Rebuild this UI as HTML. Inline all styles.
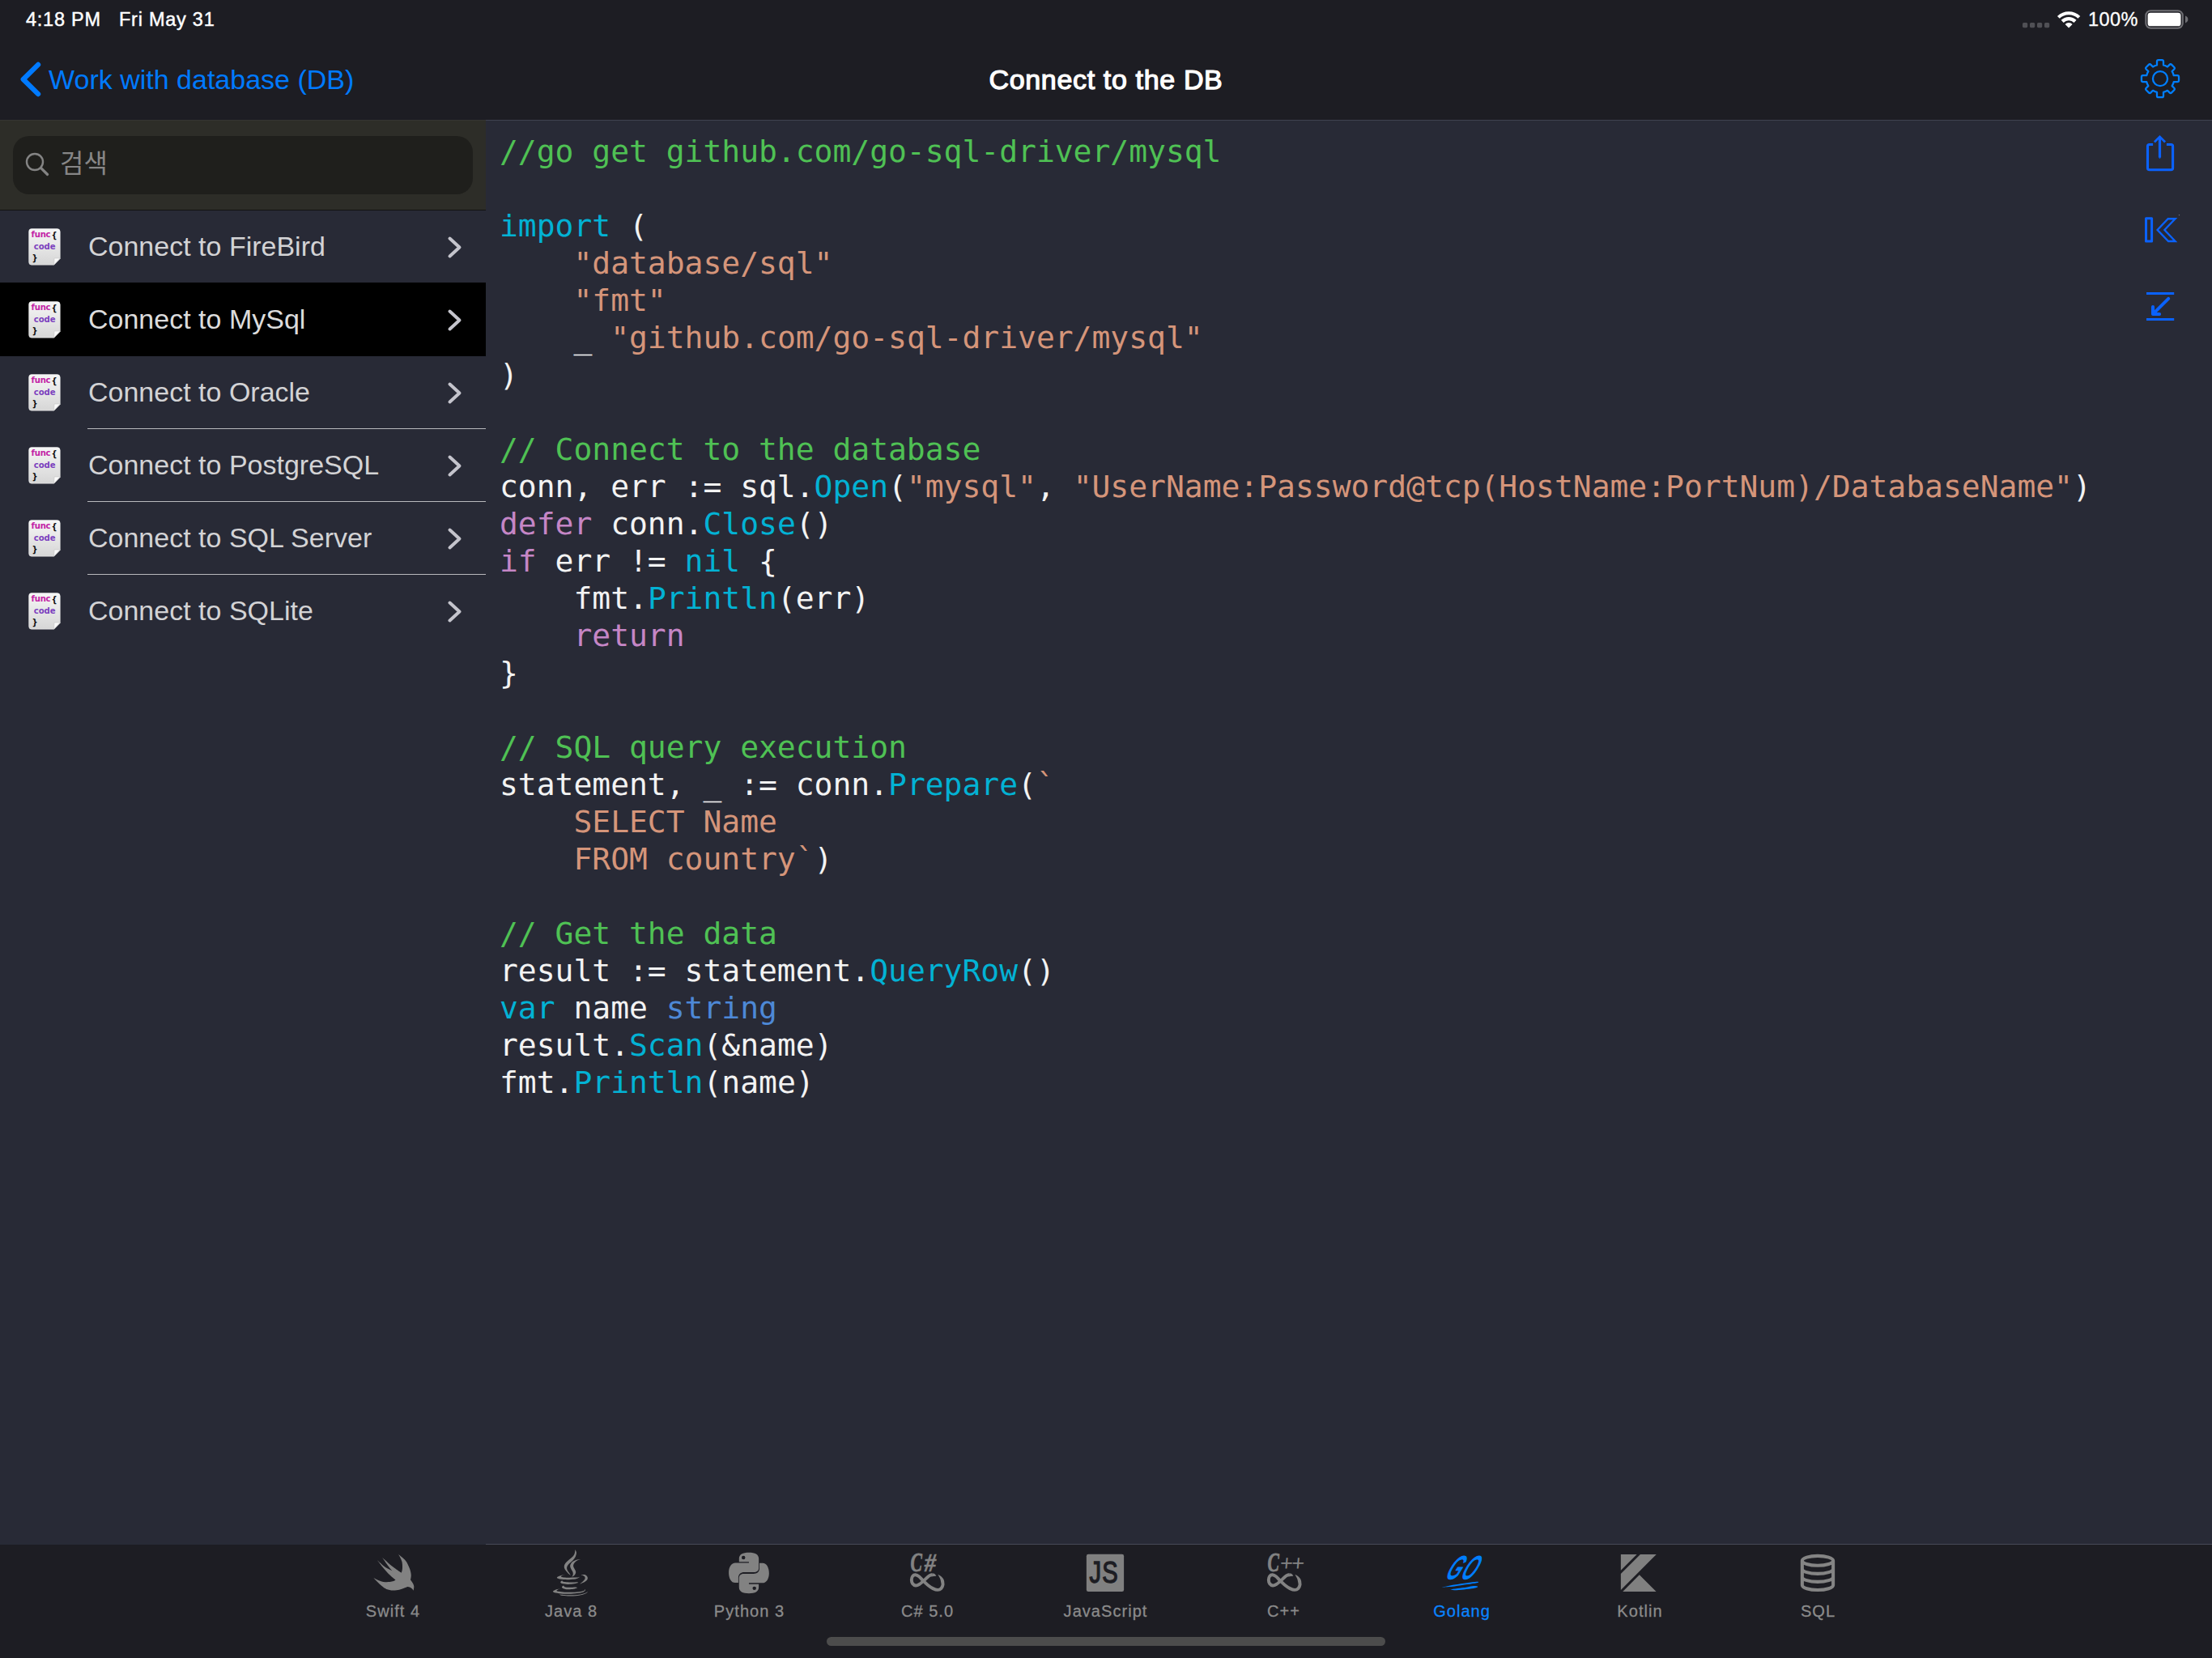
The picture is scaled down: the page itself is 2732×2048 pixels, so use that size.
<!DOCTYPE html>
<html lang="en">
<head>
<meta charset="utf-8">
<title>Connect to the DB</title>
<style>
*{box-sizing:border-box;margin:0;padding:0}
html,body{width:2732px;height:2048px;overflow:hidden;background:#282a36}
body{position:relative;font-family:"Liberation Sans","Noto Sans CJK KR",sans-serif;color:#fff;-webkit-font-smoothing:antialiased}
.abs{position:absolute}
/* ---------- top bar ---------- */
#top{position:absolute;left:0;top:0;width:2732px;height:148px;background:#1d1d23}
#topline{position:absolute;left:0;top:148px;width:2732px;height:1px;background:#3f4250}
#topline i{position:absolute;left:0;top:0;width:600px;height:1px;background:#353532}
.st{position:absolute;top:10px;font-size:23.5px;line-height:28px;white-space:nowrap;color:#fff;letter-spacing:.75px;-webkit-text-stroke:.45px #fff}
#back{position:absolute;left:60px;top:79px;font-size:34px;line-height:38px;color:#007aff;white-space:nowrap}
#title{position:absolute;left:966px;width:800px;top:79px;text-align:center;font-size:34px;line-height:38px;letter-spacing:.65px;-webkit-text-stroke:1.25px #fff;color:#fff;white-space:nowrap}
/* ---------- sidebar ---------- */
#searchbar{position:absolute;left:0;top:149px;width:600px;height:111px;background:#2d2d28;border-bottom:1px solid #131311}
#field{position:absolute;left:16px;top:19px;width:568px;height:72px;border-radius:20px;background:#1f1f1c}
#ph{position:absolute;left:58px;top:11px;font-size:32px;line-height:46px;color:#868686;white-space:nowrap;font-family:"Liberation Sans","Noto Sans CJK KR",sans-serif}
.row{position:absolute;left:0;width:600px;height:90px}
.row.sel{background:#000;height:91px;margin-top:-1px}
.row .t{position:absolute;left:109px;top:25px;font-size:34px;line-height:38px;color:#d3d3d5;white-space:nowrap}
.row.sel .t{color:#dcdcdc;top:26px}
.row .sep{position:absolute;left:108px;right:0;bottom:0;height:1px;background:#b9b9bd}
.row svg.chev{position:absolute;left:551.7px;top:30.5px}
.row.sel svg.chev{top:31.5px}
.row .ico{position:absolute;left:34.5px;top:22px;width:40px;height:46px}
.row.sel .ico{top:23px}
/* ---------- code ---------- */
#code{position:absolute;left:617px;top:164px;font-family:"DejaVu Sans Mono","Liberation Mono",monospace;font-size:38px;line-height:46px;color:#f3f3f3;white-space:pre;letter-spacing:-.02px}
.c{color:#4fc154}.k{color:#03b2d4}.s{color:#d5957a}.p{color:#c586c6}.b{color:#4d88d6}
/* ---------- tab bar ---------- */
#tabline{position:absolute;left:600px;top:1907px;width:2132px;height:1px;background:#464957}
#tab{position:absolute;left:0;top:1908px;width:2732px;height:140px;background:#1d1d23}
.ti{position:absolute;top:0;width:220px;height:100px;text-align:center;color:#8b8b8b}
.ti span{position:absolute;left:0;width:220px;top:70px;font-size:20px;line-height:24px;letter-spacing:1.05px;padding-left:1.05px;white-space:nowrap;-webkit-text-stroke:.3px currentColor}
.ti svg{position:absolute}
.ti.on{color:#0a84ff}
#home{position:absolute;left:1021px;top:114px;width:690px;height:11px;border-radius:6px;background:#4c4c4c}
</style>
</head>
<body>

<!-- ================= TOP BAR ================= -->
<div id="top">
  <div class="st" style="left:32px">4:18 PM</div>
  <div class="st" style="left:147px">Fri May 31</div>
  <div class="st" style="left:2579px;letter-spacing:.45px;-webkit-text-stroke:.3px #fff">100%</div>
  <svg class="abs" style="left:2490px;top:0" width="230" height="48" viewBox="2490 0 230 48"><rect x="2498.0" y="28" width="6.2" height="6.2" rx="1.6" fill="#505055"/><rect x="2507.0" y="28" width="6.2" height="6.2" rx="1.6" fill="#505055"/><rect x="2516.0" y="28" width="6.2" height="6.2" rx="1.6" fill="#505055"/><rect x="2525.0" y="28" width="6.2" height="6.2" rx="1.6" fill="#505055"/><path d="M2540.93 19.93A20.40 20.40 0 0 1 2569.27 19.93L2566.42 22.87A16.30 16.30 0 0 0 2543.78 22.87ZM2545.65 24.82A13.60 13.60 0 0 1 2564.55 24.82L2561.56 27.91A9.30 9.30 0 0 0 2548.64 27.91ZM2555.10 34.60L2550.58 29.92A6.50 6.50 0 0 1 2559.62 29.92Z" fill="#fff"/><rect x="2650.3" y="13.2" width="45.5" height="21.6" rx="6" fill="none" stroke="#6f6f74" stroke-width="2"/><rect x="2652.6" y="15.7" width="40.9" height="16.6" rx="3.4" fill="#fff"/><path d="M2699 19.6 Q2702.4 21 2702.4 24 Q2702.4 27 2699 28.4Z" fill="#6f6f74"/></svg>
  <svg class="abs" style="left:20px;top:70px" width="40" height="56" viewBox="20 70 40 56"><path d="M47.1 79.9L28.7 98L47.1 116.1" fill="none" stroke="#007aff" stroke-width="6.2" stroke-linecap="round" stroke-linejoin="round"/></svg>
  <div id="back">Work with database (DB)</div>
  <div id="title">Connect to the DB</div>
  <svg class="abs" style="left:2638px;top:67px" width="60" height="60" viewBox="2638 67 60 60" fill="none" stroke="#007fff" stroke-width="2.3" stroke-linejoin="round"><path d="M2664.00 80.42L2664.00 75.90Q2664.00 74.10 2665.80 74.10L2670.20 74.10Q2672.00 74.10 2672.00 75.90L2672.00 80.42A17.20 17.20 0 0 1 2677.00 82.49L2679.60 79.90Q2680.87 78.62 2682.14 79.90L2685.25 83.01Q2686.53 84.28 2685.25 85.55L2682.66 88.15A17.20 17.20 0 0 1 2684.73 93.15L2689.25 93.15Q2691.05 93.15 2691.05 94.95L2691.05 99.35Q2691.05 101.15 2689.25 101.15L2684.73 101.15A17.20 17.20 0 0 1 2682.66 106.15L2685.25 108.75Q2686.53 110.02 2685.25 111.29L2682.14 114.40Q2680.87 115.68 2679.60 114.40L2677.00 111.81A17.20 17.20 0 0 1 2672.00 113.88L2672.00 118.40Q2672.00 120.20 2670.20 120.20L2665.80 120.20Q2664.00 120.20 2664.00 118.40L2664.00 113.88A17.20 17.20 0 0 1 2659.00 111.81L2656.40 114.40Q2655.13 115.68 2653.86 114.40L2650.75 111.29Q2649.47 110.02 2650.75 108.75L2653.34 106.15A17.20 17.20 0 0 1 2651.27 101.15L2646.75 101.15Q2644.95 101.15 2644.95 99.35L2644.95 94.95Q2644.95 93.15 2646.75 93.15L2651.27 93.15A17.20 17.20 0 0 1 2653.34 88.15L2650.75 85.55Q2649.47 84.28 2650.75 83.01L2653.86 79.90Q2655.13 78.62 2656.40 79.90L2659.00 82.49A17.20 17.20 0 0 1 2664.00 80.42 Z"/><circle cx="2668" cy="97.15" r="9.05"/></svg>
</div>
<div id="topline"><i></i></div>

<!-- ================= SIDEBAR ================= -->
<div id="searchbar">
  <div id="field">
    <svg class="abs" style="left:10px;top:14px" width="44" height="44" viewBox="10 14 44 44" fill="none" stroke="#848484"><circle cx="27" cy="32" r="10" stroke-width="2.4"/><path d="M34.4 39.4L42.6 47.5" stroke-width="3.2" stroke-linecap="round"/></svg>
    <div id="ph">검색</div>
  </div>
</div>
<div class="row" style="top:260px"><div class="ico"><svg width="40" height="46" viewBox="0 0 40 46"><defs><linearGradient id="pg" x1="0" y1="0" x2="0" y2="1"><stop offset="0" stop-color="#f6f6f6"/><stop offset="1" stop-color="#d6d6d6"/></linearGradient></defs><path d="M4 .6H35.5Q39.3 .6 39.3 4.4V37.4L31.6 45.2H4Q.6 45.2 .6 41.6V4.2Q.6 .6 4 .6Z" fill="url(#pg)" stroke="#fff" stroke-opacity=".55" stroke-width=".8"/><path d="M32 37H39.3L31.6 45.2Z" fill="#fafafa" stroke="#bdbdbd" stroke-width=".5"/><text x="3.6" y="11.1" font-family="DejaVu Sans,Liberation Sans,sans-serif" font-weight="bold" font-size="10.1" fill="#c221a6" letter-spacing="-.25">func</text><text x="28.6" y="11.6" font-family="DejaVu Sans,Liberation Sans,sans-serif" font-weight="bold" font-size="10" fill="#111">{</text><text x="6.8" y="26" font-family="DejaVu Sans,Liberation Sans,sans-serif" font-weight="bold" font-size="10.1" fill="#7b3fbe" letter-spacing="-.1">code</text><text x="4.6" y="40.2" font-family="DejaVu Sans,Liberation Sans,sans-serif" font-weight="bold" font-size="10" fill="#111">}</text></svg></div><div class="t">Connect to FireBird</div><svg class="chev" width="20" height="29" viewBox="0 0 20 29"><path d="M3.5 3.5 L15.5 14.5 L3.5 25.5" fill="none" stroke="#c4c4cc" stroke-width="4" stroke-linecap="round" stroke-linejoin="round"/></svg></div>
<div class="row sel" style="top:350px"><div class="ico"><svg width="40" height="46" viewBox="0 0 40 46"><defs><linearGradient id="pg" x1="0" y1="0" x2="0" y2="1"><stop offset="0" stop-color="#f6f6f6"/><stop offset="1" stop-color="#d6d6d6"/></linearGradient></defs><path d="M4 .6H35.5Q39.3 .6 39.3 4.4V37.4L31.6 45.2H4Q.6 45.2 .6 41.6V4.2Q.6 .6 4 .6Z" fill="url(#pg)" stroke="#fff" stroke-opacity=".55" stroke-width=".8"/><path d="M32 37H39.3L31.6 45.2Z" fill="#fafafa" stroke="#bdbdbd" stroke-width=".5"/><text x="3.6" y="11.1" font-family="DejaVu Sans,Liberation Sans,sans-serif" font-weight="bold" font-size="10.1" fill="#c221a6" letter-spacing="-.25">func</text><text x="28.6" y="11.6" font-family="DejaVu Sans,Liberation Sans,sans-serif" font-weight="bold" font-size="10" fill="#111">{</text><text x="6.8" y="26" font-family="DejaVu Sans,Liberation Sans,sans-serif" font-weight="bold" font-size="10.1" fill="#7b3fbe" letter-spacing="-.1">code</text><text x="4.6" y="40.2" font-family="DejaVu Sans,Liberation Sans,sans-serif" font-weight="bold" font-size="10" fill="#111">}</text></svg></div><div class="t">Connect to MySql</div><svg class="chev" width="20" height="29" viewBox="0 0 20 29"><path d="M3.5 3.5 L15.5 14.5 L3.5 25.5" fill="none" stroke="#c4c4cc" stroke-width="4" stroke-linecap="round" stroke-linejoin="round"/></svg></div>
<div class="row" style="top:440px"><div class="ico"><svg width="40" height="46" viewBox="0 0 40 46"><defs><linearGradient id="pg" x1="0" y1="0" x2="0" y2="1"><stop offset="0" stop-color="#f6f6f6"/><stop offset="1" stop-color="#d6d6d6"/></linearGradient></defs><path d="M4 .6H35.5Q39.3 .6 39.3 4.4V37.4L31.6 45.2H4Q.6 45.2 .6 41.6V4.2Q.6 .6 4 .6Z" fill="url(#pg)" stroke="#fff" stroke-opacity=".55" stroke-width=".8"/><path d="M32 37H39.3L31.6 45.2Z" fill="#fafafa" stroke="#bdbdbd" stroke-width=".5"/><text x="3.6" y="11.1" font-family="DejaVu Sans,Liberation Sans,sans-serif" font-weight="bold" font-size="10.1" fill="#c221a6" letter-spacing="-.25">func</text><text x="28.6" y="11.6" font-family="DejaVu Sans,Liberation Sans,sans-serif" font-weight="bold" font-size="10" fill="#111">{</text><text x="6.8" y="26" font-family="DejaVu Sans,Liberation Sans,sans-serif" font-weight="bold" font-size="10.1" fill="#7b3fbe" letter-spacing="-.1">code</text><text x="4.6" y="40.2" font-family="DejaVu Sans,Liberation Sans,sans-serif" font-weight="bold" font-size="10" fill="#111">}</text></svg></div><div class="t">Connect to Oracle</div><svg class="chev" width="20" height="29" viewBox="0 0 20 29"><path d="M3.5 3.5 L15.5 14.5 L3.5 25.5" fill="none" stroke="#c4c4cc" stroke-width="4" stroke-linecap="round" stroke-linejoin="round"/></svg><div class="sep"></div></div>
<div class="row" style="top:530px"><div class="ico"><svg width="40" height="46" viewBox="0 0 40 46"><defs><linearGradient id="pg" x1="0" y1="0" x2="0" y2="1"><stop offset="0" stop-color="#f6f6f6"/><stop offset="1" stop-color="#d6d6d6"/></linearGradient></defs><path d="M4 .6H35.5Q39.3 .6 39.3 4.4V37.4L31.6 45.2H4Q.6 45.2 .6 41.6V4.2Q.6 .6 4 .6Z" fill="url(#pg)" stroke="#fff" stroke-opacity=".55" stroke-width=".8"/><path d="M32 37H39.3L31.6 45.2Z" fill="#fafafa" stroke="#bdbdbd" stroke-width=".5"/><text x="3.6" y="11.1" font-family="DejaVu Sans,Liberation Sans,sans-serif" font-weight="bold" font-size="10.1" fill="#c221a6" letter-spacing="-.25">func</text><text x="28.6" y="11.6" font-family="DejaVu Sans,Liberation Sans,sans-serif" font-weight="bold" font-size="10" fill="#111">{</text><text x="6.8" y="26" font-family="DejaVu Sans,Liberation Sans,sans-serif" font-weight="bold" font-size="10.1" fill="#7b3fbe" letter-spacing="-.1">code</text><text x="4.6" y="40.2" font-family="DejaVu Sans,Liberation Sans,sans-serif" font-weight="bold" font-size="10" fill="#111">}</text></svg></div><div class="t">Connect to PostgreSQL</div><svg class="chev" width="20" height="29" viewBox="0 0 20 29"><path d="M3.5 3.5 L15.5 14.5 L3.5 25.5" fill="none" stroke="#c4c4cc" stroke-width="4" stroke-linecap="round" stroke-linejoin="round"/></svg><div class="sep"></div></div>
<div class="row" style="top:620px"><div class="ico"><svg width="40" height="46" viewBox="0 0 40 46"><defs><linearGradient id="pg" x1="0" y1="0" x2="0" y2="1"><stop offset="0" stop-color="#f6f6f6"/><stop offset="1" stop-color="#d6d6d6"/></linearGradient></defs><path d="M4 .6H35.5Q39.3 .6 39.3 4.4V37.4L31.6 45.2H4Q.6 45.2 .6 41.6V4.2Q.6 .6 4 .6Z" fill="url(#pg)" stroke="#fff" stroke-opacity=".55" stroke-width=".8"/><path d="M32 37H39.3L31.6 45.2Z" fill="#fafafa" stroke="#bdbdbd" stroke-width=".5"/><text x="3.6" y="11.1" font-family="DejaVu Sans,Liberation Sans,sans-serif" font-weight="bold" font-size="10.1" fill="#c221a6" letter-spacing="-.25">func</text><text x="28.6" y="11.6" font-family="DejaVu Sans,Liberation Sans,sans-serif" font-weight="bold" font-size="10" fill="#111">{</text><text x="6.8" y="26" font-family="DejaVu Sans,Liberation Sans,sans-serif" font-weight="bold" font-size="10.1" fill="#7b3fbe" letter-spacing="-.1">code</text><text x="4.6" y="40.2" font-family="DejaVu Sans,Liberation Sans,sans-serif" font-weight="bold" font-size="10" fill="#111">}</text></svg></div><div class="t">Connect to SQL Server</div><svg class="chev" width="20" height="29" viewBox="0 0 20 29"><path d="M3.5 3.5 L15.5 14.5 L3.5 25.5" fill="none" stroke="#c4c4cc" stroke-width="4" stroke-linecap="round" stroke-linejoin="round"/></svg><div class="sep"></div></div>
<div class="row" style="top:710px"><div class="ico"><svg width="40" height="46" viewBox="0 0 40 46"><defs><linearGradient id="pg" x1="0" y1="0" x2="0" y2="1"><stop offset="0" stop-color="#f6f6f6"/><stop offset="1" stop-color="#d6d6d6"/></linearGradient></defs><path d="M4 .6H35.5Q39.3 .6 39.3 4.4V37.4L31.6 45.2H4Q.6 45.2 .6 41.6V4.2Q.6 .6 4 .6Z" fill="url(#pg)" stroke="#fff" stroke-opacity=".55" stroke-width=".8"/><path d="M32 37H39.3L31.6 45.2Z" fill="#fafafa" stroke="#bdbdbd" stroke-width=".5"/><text x="3.6" y="11.1" font-family="DejaVu Sans,Liberation Sans,sans-serif" font-weight="bold" font-size="10.1" fill="#c221a6" letter-spacing="-.25">func</text><text x="28.6" y="11.6" font-family="DejaVu Sans,Liberation Sans,sans-serif" font-weight="bold" font-size="10" fill="#111">{</text><text x="6.8" y="26" font-family="DejaVu Sans,Liberation Sans,sans-serif" font-weight="bold" font-size="10.1" fill="#7b3fbe" letter-spacing="-.1">code</text><text x="4.6" y="40.2" font-family="DejaVu Sans,Liberation Sans,sans-serif" font-weight="bold" font-size="10" fill="#111">}</text></svg></div><div class="t">Connect to SQLite</div><svg class="chev" width="20" height="29" viewBox="0 0 20 29"><path d="M3.5 3.5 L15.5 14.5 L3.5 25.5" fill="none" stroke="#c4c4cc" stroke-width="4" stroke-linecap="round" stroke-linejoin="round"/></svg></div>

<!-- ================= CODE ================= -->
<div id="code"><span class="c">//go get github.com/go-sql-driver/mysql</span>

<span class="k">import</span> (
    <span class="s">"database/sql"</span>
    <span class="s">"fmt"</span>
    _ <span class="s">"github.com/go-sql-driver/mysql"</span>
)

<span class="c">// Connect to the database</span>
conn, err := sql.<span class="k">Open</span>(<span class="s">"mysql"</span>, <span class="s">"UserName:Password@tcp(HostName:PortNum)/DatabaseName"</span>)
<span class="p">defer</span> conn.<span class="k">Close</span>()
<span class="p">if</span> err != <span class="k">nil</span> {
    fmt.<span class="k">Println</span>(err)
    <span class="p">return</span>
}

<span class="c">// SQL query execution</span>
statement, _ := conn.<span class="k">Prepare</span>(<span class="s">`</span>
<span class="s">    SELECT Name</span>
<span class="s">    FROM country`</span>)

<span class="c">// Get the data</span>
result := statement.<span class="k">QueryRow</span>()
<span class="k">var</span> name <span class="b">string</span>
result.<span class="k">Scan</span>(&amp;name)
fmt.<span class="k">Println</span>(name)</div>
<svg class="abs" style="left:2640px;top:160px" width="60" height="250" viewBox="2640 160 60 250" fill="none" stroke="#0a62ff"><path d="M2659.1 178.5H2654.7Q2652.5 178.5 2652.5 180.7V207.5Q2652.5 209.7 2654.7 209.7H2681.4Q2683.6 209.7 2683.6 207.5V180.7Q2683.6 178.5 2681.4 178.5H2675.9" stroke-width="3.1"/><path d="M2667.5 169.5V194.6" stroke-width="3.2"/><path d="M2665.9 194.4L2667.5 196L2669.1 194.4Z" fill="#0a62ff" stroke="none"/><path d="M2660.9 175.5L2667.5 168.9L2674.1 175.5" stroke-width="2.7" stroke-linejoin="miter"/><rect x="2650.5" y="269.7" width="7.1" height="28.4" stroke-width="3" stroke-linejoin="round"/><path d="M2664.6 284L2677.7 270.2H2686.6L2673.4 284L2686.6 298H2678.1Z" stroke-width="2.35" stroke-linejoin="miter"/><rect x="2690.9" y="265" width="1.2" height="1.2" fill="#6d6f7e" stroke="none"/><path d="M2651 362.5H2685.2M2651 394.5H2685.2" stroke-width="3.1"/><path d="M2678.2 368.8L2659.6 387.4" stroke-width="4" stroke-linecap="round"/><path d="M2659 378.9V388H2667.1" stroke-width="4" stroke-linecap="round" stroke-linejoin="round"/></svg>

<!-- ================= TAB BAR ================= -->
<div id="tabline"></div>
<div id="tab">
  <svg class="abs" style="left:446px;top:2px" width="80" height="65" viewBox="0 0 2041 1658"><path d="M1175.0 255.0C1212.5 287.5 1340.8 375.8 1400.0 450.0C1459.2 524.2 1500.8 625.0 1530.0 700.0C1559.2 775.0 1570.8 840.0 1575.0 900.0C1579.2 960.0 1558.3 1033.3 1555.0 1060.0C1565.8 1075.0 1601.7 1116.7 1620.0 1150.0C1638.3 1183.3 1660.0 1219.2 1665.0 1260.0C1670.0 1300.8 1652.5 1372.5 1650.0 1395.0C1641.7 1385.0 1620.0 1352.5 1600.0 1335.0C1580.0 1317.5 1555.0 1299.2 1530.0 1290.0C1505.0 1280.8 1480.0 1275.0 1450.0 1280.0C1420.0 1285.0 1391.7 1305.0 1350.0 1320.0C1308.3 1335.0 1258.3 1358.3 1200.0 1370.0C1141.7 1381.7 1066.7 1393.3 1000.0 1390.0C933.3 1386.7 858.3 1373.3 800.0 1350.0C741.7 1326.7 696.7 1286.7 650.0 1250.0C603.3 1213.3 564.2 1173.3 520.0 1130.0C475.8 1086.7 407.5 1013.3 385.0 990.0C404.2 1000.0 447.5 1028.3 500.0 1050.0C552.5 1071.7 633.3 1107.5 700.0 1120.0C766.7 1132.5 846.7 1128.3 900.0 1125.0C953.3 1121.7 989.2 1110.8 1020.0 1100.0C1050.8 1089.2 1074.2 1066.7 1085.0 1060.0C1054.2 1033.3 964.2 963.3 900.0 900.0C835.8 836.7 765.0 756.7 700.0 680.0C635.0 603.3 541.7 480.0 510.0 440.0C541.7 468.3 643.3 565.0 700.0 610.0C756.7 655.0 802.5 681.7 850.0 710.0C897.5 738.3 962.5 768.3 985.0 780.0C970.8 763.3 934.2 723.3 900.0 680.0C865.8 636.7 818.3 573.3 780.0 520.0C741.7 466.7 688.3 386.7 670.0 360.0C700.0 386.7 786.7 466.7 850.0 520.0C913.3 573.3 980.0 627.5 1050.0 680.0C1120.0 732.5 1233.3 809.2 1270.0 835.0C1275.0 812.5 1296.7 755.8 1300.0 700.0C1303.3 644.2 1301.7 558.3 1290.0 500.0C1278.3 441.7 1249.2 390.8 1230.0 350.0C1210.8 309.2 1184.2 270.8 1175.0 255.0Z" fill="#828282"/></svg>
<div class="ti" style="left:375px"><span>Swift 4</span></div>
<svg class="abs" style="left:666px;top:2px" width="80" height="65" viewBox="0 0 2041 1658"><path d="M1135.0 100.0C1141.2 116.7 1171.2 161.7 1172.0 200.0C1172.8 238.3 1160.3 288.3 1140.0 330.0C1119.7 371.7 1085.0 411.7 1050.0 450.0C1015.0 488.3 959.7 525.0 930.0 560.0C900.3 595.0 878.7 626.7 872.0 660.0C865.3 693.3 877.0 728.3 890.0 760.0C903.0 791.7 933.3 824.2 950.0 850.0C966.7 875.8 983.3 904.2 990.0 915.0C975.0 902.5 930.0 870.8 900.0 840.0C870.0 809.2 829.2 765.0 810.0 730.0C790.8 695.0 783.3 661.7 785.0 630.0C786.7 598.3 797.5 571.7 820.0 540.0C842.5 508.3 883.3 473.3 920.0 440.0C956.7 406.7 1008.3 373.3 1040.0 340.0C1071.7 306.7 1094.2 280.0 1110.0 240.0C1125.8 200.0 1130.8 123.3 1135.0 100.0ZM1300.0 405.0C1283.3 411.7 1230.8 426.7 1200.0 445.0C1169.2 463.3 1135.8 490.8 1115.0 515.0C1094.2 539.2 1080.0 565.8 1075.0 590.0C1070.0 614.2 1075.0 633.3 1085.0 660.0C1095.0 686.7 1123.8 721.7 1135.0 750.0C1146.2 778.3 1156.2 803.3 1152.0 830.0C1147.8 856.7 1131.2 887.5 1110.0 910.0C1088.8 932.5 1039.2 955.8 1025.0 965.0C1031.2 954.2 1056.2 924.2 1062.0 900.0C1067.8 875.8 1068.7 848.3 1060.0 820.0C1051.3 791.7 1024.2 760.0 1010.0 730.0C995.8 700.0 978.3 668.3 975.0 640.0C971.7 611.7 975.8 586.7 990.0 560.0C1004.2 533.3 1030.0 502.5 1060.0 480.0C1090.0 457.5 1130.0 437.5 1170.0 425.0C1210.0 412.5 1278.3 408.3 1300.0 405.0ZM815.0 895.0C787.5 900.8 692.8 915.5 650.0 930.0C607.2 944.5 563.0 966.2 558.0 982.0C553.0 997.8 579.7 1014.0 620.0 1025.0C660.3 1036.0 736.7 1044.7 800.0 1048.0C863.3 1051.3 936.7 1049.7 1000.0 1045.0C1063.3 1040.3 1131.7 1035.0 1180.0 1020.0C1228.3 1005.0 1271.7 965.8 1290.0 955.0C1281.7 958.3 1271.7 970.0 1240.0 975.0C1208.3 980.0 1156.7 983.0 1100.0 985.0C1043.3 987.0 960.0 988.7 900.0 987.0C840.0 985.3 775.0 980.3 740.0 975.0C705.0 969.7 693.3 963.3 690.0 955.0C686.7 946.7 699.2 935.0 720.0 925.0C740.8 915.0 799.2 900.0 815.0 895.0ZM1325.0 900.0C1342.5 898.8 1399.2 884.7 1430.0 893.0C1460.8 901.3 1494.7 927.2 1510.0 950.0C1525.3 972.8 1532.0 1003.3 1522.0 1030.0C1512.0 1056.7 1490.3 1082.5 1450.0 1110.0C1409.7 1137.5 1308.3 1180.8 1280.0 1195.0C1297.5 1179.2 1358.0 1129.2 1385.0 1100.0C1412.0 1070.8 1434.2 1044.2 1442.0 1020.0C1449.8 995.8 1441.5 971.3 1432.0 955.0C1422.5 938.7 1402.8 928.7 1385.0 922.0C1367.2 915.3 1335.0 916.2 1325.0 915.0L1325.0 900.0ZM725.0 1080.0C715.5 1088.3 668.8 1114.2 668.0 1130.0C667.2 1145.8 681.3 1163.8 720.0 1175.0C758.7 1186.2 836.7 1195.8 900.0 1197.0C963.3 1198.2 1045.0 1189.8 1100.0 1182.0C1155.0 1174.2 1208.3 1155.3 1230.0 1150.0C1225.0 1146.7 1230.0 1132.2 1200.0 1130.0C1170.0 1127.8 1108.3 1137.0 1050.0 1137.0C991.7 1137.0 900.8 1134.2 850.0 1130.0C799.2 1125.8 765.8 1120.3 745.0 1112.0C724.2 1103.7 728.3 1085.3 725.0 1080.0ZM770.0 1240.0C760.5 1247.0 714.7 1267.0 713.0 1282.0C711.3 1297.0 728.8 1317.5 760.0 1330.0C791.2 1342.5 846.7 1354.2 900.0 1357.0C953.3 1359.8 1029.2 1354.8 1080.0 1347.0C1130.8 1339.2 1184.2 1316.2 1205.0 1310.0C1195.8 1306.7 1192.5 1292.2 1150.0 1290.0C1107.5 1287.8 1007.5 1298.7 950.0 1297.0C892.5 1295.3 835.0 1289.5 805.0 1280.0C775.0 1270.5 775.8 1246.7 770.0 1240.0ZM660.0 1335.0C633.3 1341.7 538.3 1360.0 500.0 1375.0C461.7 1390.0 426.7 1409.2 430.0 1425.0C433.3 1440.8 466.7 1458.0 520.0 1470.0C573.3 1482.0 670.0 1492.5 750.0 1497.0C830.0 1501.5 916.7 1501.2 1000.0 1497.0C1083.3 1492.8 1183.3 1482.8 1250.0 1472.0C1316.7 1461.2 1365.5 1447.3 1400.0 1432.0C1434.5 1416.7 1450.3 1393.7 1457.0 1380.0C1463.7 1366.3 1442.8 1355.0 1440.0 1350.0C1436.7 1356.7 1443.3 1376.7 1420.0 1390.0C1396.7 1403.3 1361.7 1420.0 1300.0 1430.0C1238.3 1440.0 1133.3 1447.5 1050.0 1450.0C966.7 1452.5 871.7 1449.2 800.0 1445.0C728.3 1440.8 661.7 1432.5 620.0 1425.0C578.3 1417.5 556.7 1409.2 550.0 1400.0C543.3 1390.8 561.7 1380.8 580.0 1370.0C598.3 1359.2 646.7 1340.8 660.0 1335.0ZM640.0 1510.0C650.0 1517.0 656.7 1542.5 700.0 1552.0C743.3 1561.5 825.0 1565.3 900.0 1567.0C975.0 1568.7 1075.0 1567.8 1150.0 1562.0C1225.0 1556.2 1295.0 1545.3 1350.0 1532.0C1405.0 1518.7 1450.0 1499.0 1480.0 1482.0C1510.0 1465.0 1521.7 1438.7 1530.0 1430.0C1515.0 1438.3 1478.3 1465.8 1440.0 1480.0C1401.7 1494.2 1356.7 1505.8 1300.0 1515.0C1243.3 1524.2 1175.0 1531.7 1100.0 1535.0C1025.0 1538.3 916.7 1536.7 850.0 1535.0C783.3 1533.3 735.0 1529.2 700.0 1525.0C665.0 1520.8 650.0 1512.5 640.0 1510.0Z" fill="#828282"/></svg>
<div class="ti" style="left:595px"><span>Java 8</span></div>
<svg class="abs" style="left:884px;top:2px" width="80" height="65" viewBox="0 0 2041 1658"><path d="M735 490L735 390C735 250 850 195 1045 195C1240 195 1356 250 1356 390L1356 680C1356 770 1290 815 1200 815L900 815C790 815 712 880 712 985L712 1150L610 1150C490 1150 410 1010 410 835C410 660 490 525 620 525L1045 525L1045 490ZM873 300A57 57 0 1 0 873 414A57 57 0 1 0 873 300Z" fill="#828282" fill-rule="evenodd"/><path d="M735 490L735 390C735 250 850 195 1045 195C1240 195 1356 250 1356 390L1356 680C1356 770 1290 815 1200 815L900 815C790 815 712 880 712 985L712 1150L610 1150C490 1150 410 1010 410 835C410 660 490 525 620 525L1045 525L1045 490ZM873 300A57 57 0 1 0 873 414A57 57 0 1 0 873 300Z" fill="#828282" fill-rule="evenodd" transform="rotate(180 1045 840)"/></svg>
<div class="ti" style="left:815px"><span>Python 3</span></div>
<svg class="abs" style="left:1104px;top:2px" width="80" height="65" viewBox="0 0 2041 1658"><path d="M1215.0 897.0C1204.2 899.5 1172.5 901.8 1150.0 912.0C1127.5 922.2 1116.7 927.5 1080.0 958.0C1043.3 988.5 976.7 1054.7 930.0 1095.0C883.3 1135.3 840.0 1176.3 800.0 1200.0C760.0 1223.7 724.7 1240.3 690.0 1237.0C655.3 1233.7 614.2 1209.5 592.0 1180.0C569.8 1150.5 557.0 1100.0 557.0 1060.0C557.0 1020.0 571.5 966.7 592.0 940.0C612.5 913.3 647.0 898.3 680.0 900.0C713.0 901.7 748.3 917.5 790.0 950.0C831.7 982.5 881.7 1048.3 930.0 1095.0C978.3 1141.7 1030.0 1190.8 1080.0 1230.0C1130.0 1269.2 1180.0 1305.8 1230.0 1330.0C1280.0 1354.2 1336.7 1375.0 1380.0 1375.0C1423.3 1375.0 1462.5 1357.5 1490.0 1330.0C1517.5 1302.5 1538.3 1245.0 1545.0 1210.0C1551.7 1175.0 1532.5 1135.0 1530.0 1120.0" fill="none" stroke="#828282" stroke-width="100" stroke-linecap="butt" stroke-linejoin="round"/><path d="M1482.0 1125.0C1478.7 1109.2 1477.3 1068.3 1462.0 1030.0C1446.7 991.7 1402.0 917.5 1390.0 895.0C1406.7 904.2 1460.8 925.8 1490.0 950.0C1519.2 974.2 1548.0 1009.2 1565.0 1040.0C1582.0 1070.8 1587.5 1119.2 1592.0 1135.0L1482.0 1125.0ZM1205.0 848.0C1219.2 852.0 1267.8 856.7 1290.0 872.0C1312.2 887.3 1330.0 928.7 1338.0 940.0L1205.0 948.0L1205.0 848.0Z" fill="#828282"/><text transform="translate(520 800) scale(.64 1)" font-family="Liberation Serif,serif" font-style="italic" font-weight="bold" font-size="860" fill="#828282" stroke="#828282" stroke-width="22">C</text><text transform="translate(960 790) scale(.92 1)" font-family="Liberation Serif,serif" font-style="italic" font-weight="bold" font-size="790" fill="#828282" stroke="#828282" stroke-width="14">#</text></svg>
<div class="ti" style="left:1035px"><span>C# 5.0</span></div>
<svg class="abs" style="left:1325px;top:2px" width="80" height="65" viewBox="0 0 2041 1658"><rect x="430" y="250" width="1180" height="1180" rx="62" fill="#808080"/><text transform="translate(522 1153) scale(.8 1)" font-family="Liberation Sans,sans-serif" font-size="930" fill="#1d1d23" stroke="#1d1d23" stroke-width="34" letter-spacing="40">JS</text></svg>
<div class="ti" style="left:1255px"><span>JavaScript</span></div>
<svg class="abs" style="left:1545px;top:2px" width="80" height="65" viewBox="0 0 2041 1658"><path d="M1215.0 897.0C1204.2 899.5 1172.5 901.8 1150.0 912.0C1127.5 922.2 1116.7 927.5 1080.0 958.0C1043.3 988.5 976.7 1054.7 930.0 1095.0C883.3 1135.3 840.0 1176.3 800.0 1200.0C760.0 1223.7 724.7 1240.3 690.0 1237.0C655.3 1233.7 614.2 1209.5 592.0 1180.0C569.8 1150.5 557.0 1100.0 557.0 1060.0C557.0 1020.0 571.5 966.7 592.0 940.0C612.5 913.3 647.0 898.3 680.0 900.0C713.0 901.7 748.3 917.5 790.0 950.0C831.7 982.5 881.7 1048.3 930.0 1095.0C978.3 1141.7 1030.0 1190.8 1080.0 1230.0C1130.0 1269.2 1180.0 1305.8 1230.0 1330.0C1280.0 1354.2 1336.7 1375.0 1380.0 1375.0C1423.3 1375.0 1462.5 1357.5 1490.0 1330.0C1517.5 1302.5 1538.3 1245.0 1545.0 1210.0C1551.7 1175.0 1532.5 1135.0 1530.0 1120.0" fill="none" stroke="#828282" stroke-width="100" stroke-linecap="butt" stroke-linejoin="round"/><path d="M1482.0 1125.0C1478.7 1109.2 1477.3 1068.3 1462.0 1030.0C1446.7 991.7 1402.0 917.5 1390.0 895.0C1406.7 904.2 1460.8 925.8 1490.0 950.0C1519.2 974.2 1548.0 1009.2 1565.0 1040.0C1582.0 1070.8 1587.5 1119.2 1592.0 1135.0L1482.0 1125.0ZM1205.0 848.0C1219.2 852.0 1267.8 856.7 1290.0 872.0C1312.2 887.3 1330.0 928.7 1338.0 940.0L1205.0 948.0L1205.0 848.0Z" fill="#828282"/><text transform="translate(520 800) scale(.64 1)" font-family="Liberation Serif,serif" font-style="italic" font-weight="bold" font-size="860" fill="#828282" stroke="#828282" stroke-width="22">C</text><text transform="translate(900 775) skewX(-5)" font-family="Liberation Sans,sans-serif" font-size="700" letter-spacing="-48" fill="#828282">++</text></svg>
<div class="ti" style="left:1475px"><span>C++</span></div>
<svg class="abs" style="left:1765px;top:2px" width="80" height="65" viewBox="0 0 2041 1658"><path d="M405.0 1292.0C470.8 1278.8 667.5 1236.2 800.0 1213.0C932.5 1189.8 1083.3 1168.8 1200.0 1153.0C1316.7 1137.2 1439.7 1121.0 1500.0 1118.0C1560.3 1115.0 1551.7 1132.2 1562.0 1135.0C1551.7 1137.8 1560.3 1140.8 1500.0 1152.0C1439.7 1163.2 1316.7 1183.7 1200.0 1202.0C1083.3 1220.3 932.5 1247.0 800.0 1262.0C667.5 1277.0 470.8 1287.0 405.0 1292.0ZM655.0 1367.0C695.8 1360.5 809.2 1341.2 900.0 1328.0C990.8 1314.8 1116.7 1300.5 1200.0 1288.0C1283.3 1275.5 1345.0 1257.2 1400.0 1253.0C1455.0 1248.8 1508.3 1261.3 1530.0 1263.0C1529.2 1267.5 1546.7 1279.3 1525.0 1290.0C1503.3 1300.7 1470.8 1315.0 1400.0 1327.0C1329.2 1339.0 1200.0 1352.8 1100.0 1362.0C1000.0 1371.2 874.2 1381.2 800.0 1382.0C725.8 1382.8 679.2 1369.5 655.0 1367.0Z" fill="#007fff"/><text transform="translate(488 1008) skewX(-27) scale(.53 1)" font-family="Liberation Sans,sans-serif" font-style="italic" font-size="1010" letter-spacing="120" fill="#007fff" stroke="#007fff" stroke-width="46" stroke-linejoin="round">GO</text></svg>
<div class="ti on" style="left:1695px"><span>Golang</span></div>
<svg class="abs" style="left:1985px;top:2px" width="80" height="65" viewBox="0 0 2041 1658"><path d="M430 255H935L430 760ZM1045 255H1550L430 1375V865ZM1015 900L1545 1430H490Z" fill="#808080"/></svg>
<div class="ti" style="left:1915px"><span>Kotlin</span></div>
<svg class="abs" style="left:2205px;top:2px" width="80" height="65" viewBox="0 0 2041 1658"><path d="M532 455A488 152 0 1 1 1508 455A488 152 0 1 1 532 455ZM532 455V1225A488 152 0 0 0 1508 1225V455M532 712A488 152 0 0 0 1508 712M532 968A488 152 0 0 0 1508 968" fill="none" stroke="#848484" stroke-width="104"/></svg>
<div class="ti" style="left:2135px"><span>SQL</span></div>
  <div id="home"></div>
</div>
</body>
</html>
